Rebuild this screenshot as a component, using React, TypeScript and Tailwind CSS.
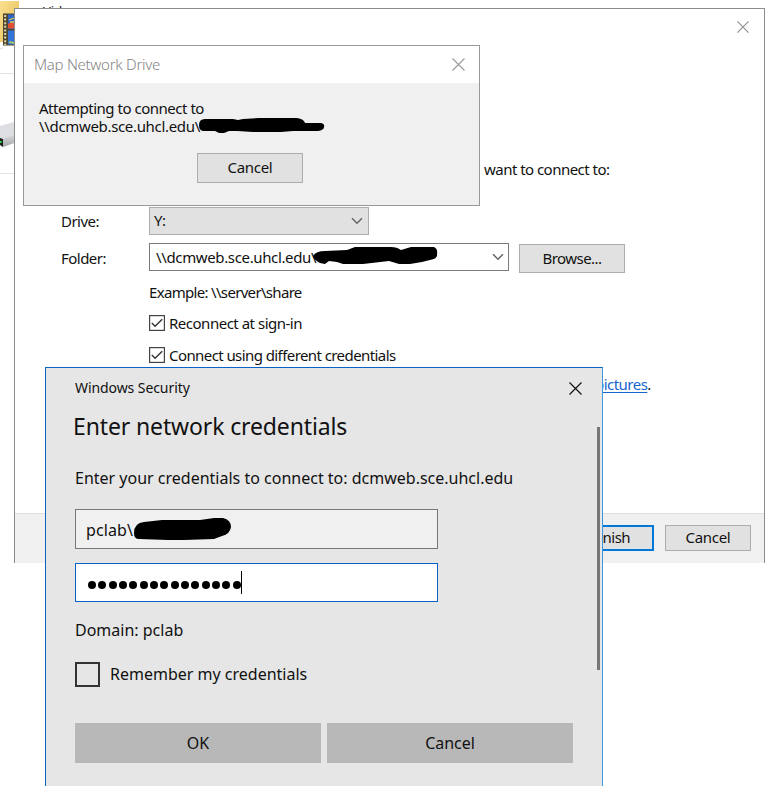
import React from "react";

function Cross({ color, size, w = 1.1 }: { color: string; size: number; w?: number }) {
  return (
    <svg width={size} height={size} viewBox="0 0 13 13" stroke={color} strokeWidth={w} fill="none" className="block shrink-0">
      <path d="M0.5 0.5L12.5 12.5M12.5 0.5L0.5 12.5" />
    </svg>
  );
}

function Chevron() {
  return (
    <svg width="12" height="8" viewBox="0 0 12 8" fill="none" stroke="#666" strokeWidth="1.5" className="block shrink-0">
      <path d="M1 1.2L6 6.2L11 1.2" />
    </svg>
  );
}

function Checked() {
  return (
    <svg width="16" height="16" viewBox="0 0 16 16" fill="none" className="block shrink-0">
      <rect x="0.6" y="0.6" width="14.8" height="14.8" fill="#fff" stroke="#444" strokeWidth="1.2" />
      <path d="M2.8 8L6.1 11.3L13.2 4.2" stroke="#333" strokeWidth="1.4" />
    </svg>
  );
}

function Desktop() {
  return (
    <svg width="100" height="180" viewBox="0 0 100 180" className="absolute left-0 top-0">
      <defs>
        <linearGradient id="folder" x1="0" y1="0" x2="1" y2="1">
          <stop offset="0" stopColor="#fbe08f" />
          <stop offset="1" stopColor="#e6bc52" />
        </linearGradient>
        <linearGradient id="drive" x1="0" y1="0" x2="0" y2="1">
          <stop offset="0" stopColor="#d9dadc" />
          <stop offset="1" stopColor="#a5a6a8" />
        </linearGradient>
      </defs>
      <path d="M0 1H19V42H0Z" fill="url(#folder)" />
      <rect x="3" y="13.5" width="12" height="32" fill="#4b4534" />
      <path d="M5.2 15V45" stroke="#e9d9a0" strokeWidth="2" strokeDasharray="2 1.6" />
      <rect x="8" y="14.5" width="7" height="14.5" fill="#2f63c4" />
      <path d="M8 24Q11 21 15 24V28.5H8Z" fill="#e2502f" />
      <path d="M9 20L14 18M10 22L14 22" stroke="#d5cf5a" strokeWidth="1.3" />
      <rect x="8" y="30.5" width="7" height="14" fill="#3474d8" />
      <path d="M9 42L14 43" stroke="#9fc46a" strokeWidth="2" />
      <path d="M0 49L3 48" stroke="#ddd" />
      <path d="M0 73.5H14M0 173.5H14" stroke="#e3e3e3" />
      <path d="M0 126L14 122V143L3 147L0 145Z" fill="#dddee1" />
      <path d="M3 139L14 135V143L3 147Z" fill="url(#drive)" />
      <path d="M0 138L3 139V147L0 145Z" fill="#1b231b" />
      <rect x="0" y="141" width="1.6" height="2" fill="#2ee04a" />
    </svg>
  );
}

const classicButton = "flex items-center justify-center border border-[#adadad] bg-[#e1e1e1]";

function MapDriveWindow() {
  return (
    <section className="absolute left-[14px] top-[8px] flex h-[555px] w-[751px] flex-col border border-b-0 border-[#8c8c8c] bg-white text-[15px] tracking-[-0.53px]">
      <header className="flex h-[36px] items-center justify-end pr-[15px]">
        <Cross color="#8a8a8a" size={12} />
      </header>
      <p className="mt-[114px] h-5 pl-[469px] leading-5">want to connect to:</p>
      <div className="mt-[28px] flex h-7 pl-[46px]">
        <span className="w-[88px] leading-[29px]">Drive:</span>
        <div className="flex w-[220px] items-center justify-between border border-[#adadad] bg-[#e1e1e1] pl-1 pr-[5px]">
          <span className="pb-[2px] leading-6">Y:</span>
          <Chevron />
        </div>
      </div>
      <div className="mt-2 flex h-[30px] pl-[46px]">
        <span className="w-[88px] leading-[31px]">Folder:</span>
        <div className="flex h-7 w-[360px] items-center border border-[#7a7a7a] bg-white pl-[6px] pr-1">
          <span className="w-[158px] whitespace-nowrap pb-px leading-6 tracking-[-0.36px]">{"\\\\dcmweb.sce.uhcl.edu\\"}</span>
          <svg width="126" height="20" viewBox="0 0 126 20" className="-ml-[1px] mr-auto block shrink-0">
            <path d="M0 9Q3 4 12 4L34 3L42 0H78Q84 0 88 3L98 0H121Q125 2 124 7Q125 12 117 13L109 15L97 17H86L76 14L50 17H30L24 15L16 14L12 17L7 16Q1 13 0 9Z" fill="#000" />
          </svg>
          <Chevron />
        </div>
        <button className={classicButton + " ml-[10px] mt-[1px] h-[29px] w-[106px]"}>Browse...</button>
      </div>
      <p className="mt-[9px] h-5 pl-[134px] leading-5 tracking-[-0.68px]">{"Example: \\\\server\\share"}</p>
      <label className="mt-[11px] flex h-5 items-center gap-1 pl-[134px]">
        <Checked />
        <span className="tracking-[-0.49px]">Reconnect at sign-in</span>
      </label>
      <label className="mt-3 flex h-5 items-center gap-1 pl-[134px]">
        <Checked />
        <span className="tracking-[-0.58px]">Connect using different credentials</span>
      </label>
      <p className="mt-[9px] h-5 pl-[580px] leading-5">
        <a className="text-[#1766cf] underline underline-offset-2">pictures</a>.
      </p>
      <footer className="mt-auto flex h-[50px] justify-end gap-[11px] border-t border-[#dfdfdf] bg-[#f0f0f0] pr-[13px] pt-[11px]">
        <button className="flex h-[26px] w-[86px] items-center justify-center border-2 border-[#0078d7] bg-[#e1e1e1] pb-[2px]">Finish</button>
        <button className={classicButton + " h-[26px] w-[86px] pb-[2px] tracking-[-0.3px]"}>Cancel</button>
      </footer>
    </section>
  );
}

function ConnectingWindow() {
  return (
    <section className="absolute left-[23px] top-[45px] flex h-[161px] w-[457px] flex-col border border-[#999] bg-[#f0f0f0] text-[15px] tracking-[-0.48px]">
      <header className="flex h-[37px] items-center justify-between bg-white pl-[10px] pr-[14px]">
        <span className="font-light tracking-[-0.28px] text-[#858585]">Map Network Drive</span>
        <Cross color="#999" size={13} />
      </header>
      <div className="pl-[15px] pt-4 leading-[18px]">
        <p>Attempting to connect to</p>
        <p className="flex h-[18px]">
          <span className="w-[160px] whitespace-nowrap tracking-[-0.33px]">{"\\\\dcmweb.sce.uhcl.edu\\"}</span>
          <svg width="127" height="16" viewBox="0 0 127 16" className="mt-px block shrink-0">
            <path d="M0 7Q0 1 6 1L34 1L39 2L44 1L60 0H98Q105 1 106 5H122Q126 6 125 9Q125 12 119 13H94L82 14H54L38 13L30 13L25 15H20L16 13H5Q0 13 0 7Z" fill="#000" />
          </svg>
        </p>
      </div>
      <button className={classicButton + " ml-[173px] mt-[18px] h-[30px] w-[106px] shrink-0 pb-[2px] tracking-[-0.3px]"}>Cancel</button>
    </section>
  );
}

function SecurityWindow() {
  return (
    <section className="absolute left-[45px] top-[367px] flex h-[419px] w-[558px] flex-col border border-b-0 border-[#0a62c4] border-r-[#3f96e0] bg-[#e6e6e6] pl-[29px] text-[16px]">
      <header className="flex h-10 items-center justify-between pr-5">
        <span className="pb-px text-[14px] tracking-[-0.08px]">Windows Security</span>
        <Cross color="#111" size={13} w={1.2} />
      </header>
      <h1 className="-ml-[2px] h-9 text-[23px] leading-9 tracking-[-0.13px]">Enter network credentials</h1>
      <p className="mt-[22px] h-6 leading-6">Enter your credentials to connect to: dcmweb.sce.uhcl.edu</p>
      <div className="mt-[19px] flex h-10 w-[363px] items-center border border-[#777] bg-[#f0f0f0] pl-[10px]">
        <span className="pt-px tracking-[0.1px]">{"pclab\\"}</span>
        <svg width="98" height="24" viewBox="0 0 98 24" className="ml-[1px] mt-px block shrink-0">
          <path d="M0 15Q0 5 10 4L28 2L66 2L80 0H89Q97 2 97 9Q96 16 88 18L80 21L50 22L34 22L5 21Q0 21 0 15Z" fill="#000" />
        </svg>
      </div>
      <div className="mt-[14px] flex h-[39px] w-[363px] items-center border border-[#0a62c4] bg-white pl-3">
        <div className="flex gap-[2.35px] pt-[5px]">
          {Array.from({ length: 15 }, (_, i) => (
            <span key={i} className="h-[8.5px] w-2 rounded-full bg-black" />
          ))}
        </div>
        <i className="h-[23px] w-px bg-black" />
      </div>
      <p className="mt-4 h-6 leading-6">Domain: pclab</p>
      <label className="mt-5 flex h-6 items-center gap-[10px]">
        <i className="size-[25px] shrink-0 border-2 border-[#333]" />
        <span>Remember my credentials</span>
      </label>
      <div className="mt-[37px] flex h-10 gap-[6px]">
        <button className="w-[246px] bg-[#b8b8b8]">OK</button>
        <button className="w-[246px] bg-[#b8b8b8] tracking-[-0.05px]">Cancel</button>
      </div>
      <i className="absolute right-[2px] top-[59px] h-[243px] w-[3px] bg-[#777]" />
    </section>
  );
}

export default function App() {
  return (
    <main className="relative h-[786px] w-[768px] overflow-hidden bg-white font-['Noto_Sans','Open_Sans',sans-serif] text-[#111]">
      <span className="absolute left-[43px] top-[4px] text-[13px] leading-[14px]">Videos</span>
      <Desktop />
      <MapDriveWindow />
      <ConnectingWindow />
      <SecurityWindow />
    </main>
  );
}
